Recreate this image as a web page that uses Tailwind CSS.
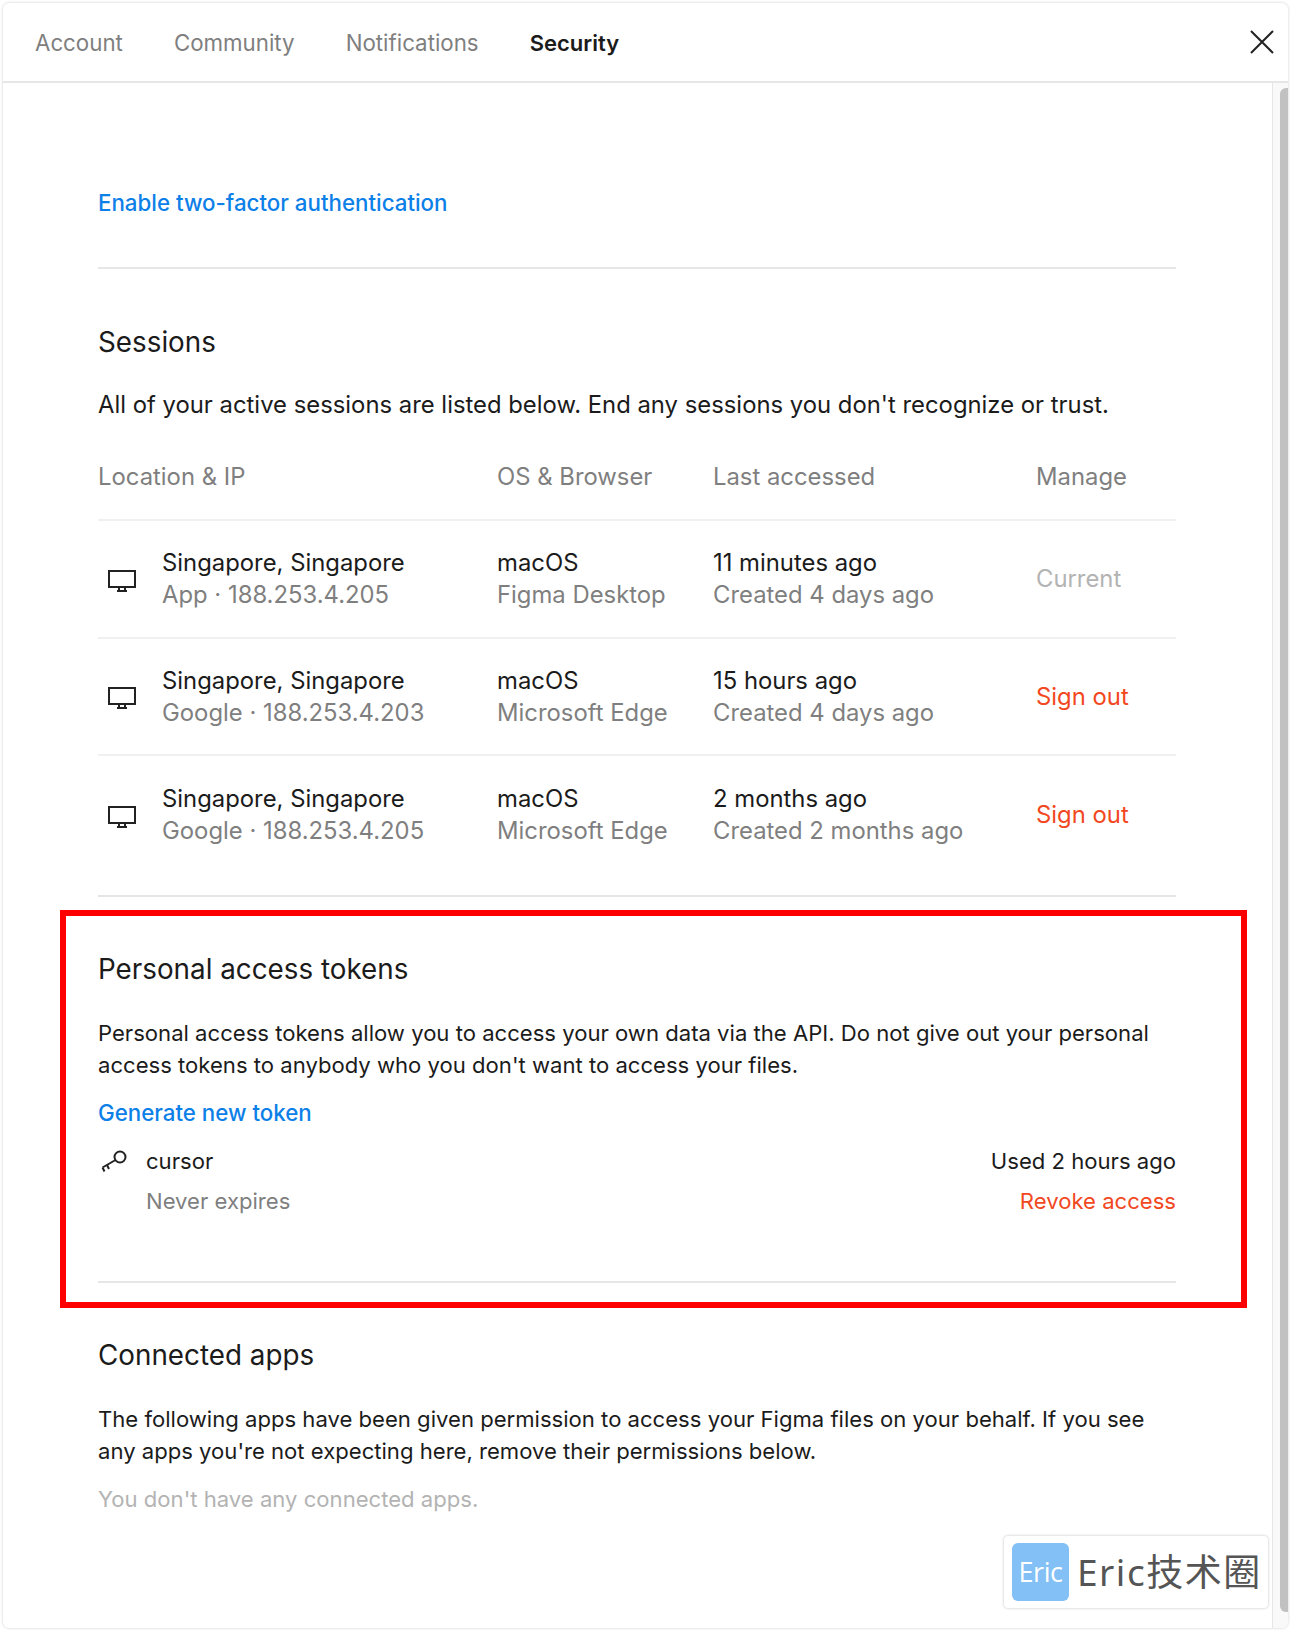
<!doctype html>
<html lang="en">
  <head>
    <meta charset="UTF-8" />
    <title>Security settings</title>
    <script src="https://cdn.jsdelivr.net/npm/@tailwindcss/browser@4"></script>
  </head>
  <body class="bg-white h-[1632px] overflow-hidden font-['Inter',sans-serif] text-[22.1px] leading-[32px] text-[#1b1b1b]">
    <div class="relative ml-[3px] mt-[3px] h-[1625px] w-[1285px] rounded-[6px] bg-white shadow-[0_0_3px_rgba(0,0,0,0.2)] overflow-hidden">
      <!-- tabs -->
      <div class="flex h-[80px] items-center justify-between border-b-2 border-[#e6e6e6] pl-[32px] pr-[14px]">
        <div class="flex gap-[51px] pt-[2px] text-[22.3px] text-[#7f7f7f]">
          <span>Account</span>
          <span>Community</span>
          <span>Notifications</span>
          <span class="font-semibold text-[22px] text-[#1b1b1b]">Security</span>
        </div>
        <svg class="w-[24px] h-[24px]" viewBox="0 0 24 24" fill="none" stroke="#222" stroke-width="2">
          <path d="M1 1l22 22M23 1L1 23" />
        </svg>
      </div>

      <div class="flex h-[1545px]">
        <div class="w-[1269px] pl-[95px] pr-[96px]">
          <div class="h-[186px] border-b-2 border-[#e6e6e6] pt-[104px]">
            <a class="font-medium text-[22.3px] text-[#0d80e8]">Enable two-factor authentication</a>
          </div>

          <h2 class="mt-[55px] text-[27.8px] leading-[36px]">Sessions</h2>
          <div class="text-[23.85px]">
            <p class="mt-[29px]">All of your active sessions are listed below. End any sessions you don't recognize or trust.</p>

            <div class="mt-[40px] grid grid-cols-[399px_216px_323px_1fr] h-[60px] border-b-2 border-[#f0f0f0] text-[#7f7f7f]">
              <span>Location &amp; IP</span>
              <span>OS &amp; Browser</span>
              <span>Last accessed</span>
              <span>Manage</span>
            </div>

            <div class="grid grid-cols-[399px_216px_323px_1fr] h-[118px] items-center border-b-2 border-[#f0f0f0]">
              <div class="flex items-center">
                <svg class="ml-[9px] mr-[25px] mt-[3px] w-[30px] h-[24px]" viewBox="0 0 30 24" fill="none" stroke="#222" stroke-width="2">
                  <path d="M2 2h26v16H2zM10 22h10M12 18v4M18 18v4" />
                </svg>
                <div>
                  <div>Singapore, Singapore</div>
                  <div class="text-[#7f7f7f]">App · 188.253.4.205</div>
                </div>
              </div>
              <div>
                <div>macOS</div>
                <div class="text-[#7f7f7f]">Figma Desktop</div>
              </div>
              <div>
                <div>11 minutes ago</div>
                <div class="text-[#7f7f7f]">Created 4 days ago</div>
              </div>
              <span class="text-[#b3b3b3]">Current</span>
            </div>

            <div class="grid grid-cols-[399px_216px_323px_1fr] h-[117px] items-center border-b-2 border-[#f0f0f0]">
              <div class="flex items-center">
                <svg class="ml-[9px] mr-[25px] mt-[3px] w-[30px] h-[24px]" viewBox="0 0 30 24" fill="none" stroke="#222" stroke-width="2">
                  <path d="M2 2h26v16H2zM10 22h10M12 18v4M18 18v4" />
                </svg>
                <div>
                  <div>Singapore, Singapore</div>
                  <div class="text-[#7f7f7f]">Google · 188.253.4.203</div>
                </div>
              </div>
              <div>
                <div>macOS</div>
                <div class="text-[#7f7f7f]">Microsoft Edge</div>
              </div>
              <div>
                <div>15 hours ago</div>
                <div class="text-[#7f7f7f]">Created 4 days ago</div>
              </div>
              <span class="text-[#f24822]">Sign out</span>
            </div>

            <div class="grid grid-cols-[399px_216px_323px_1fr] h-[118px] items-center">
              <div class="flex items-center">
                <svg class="ml-[9px] mr-[25px] mt-[3px] w-[30px] h-[24px]" viewBox="0 0 30 24" fill="none" stroke="#222" stroke-width="2">
                  <path d="M2 2h26v16H2zM10 22h10M12 18v4M18 18v4" />
                </svg>
                <div>
                  <div>Singapore, Singapore</div>
                  <div class="text-[#7f7f7f]">Google · 188.253.4.205</div>
                </div>
              </div>
              <div>
                <div>macOS</div>
                <div class="text-[#7f7f7f]">Microsoft Edge</div>
              </div>
              <div>
                <div>2 months ago</div>
                <div class="text-[#7f7f7f]">Created 2 months ago</div>
              </div>
              <span class="text-[#f24822]">Sign out</span>
            </div>
          </div>

          <div class="mt-[21px] border-t-2 border-[#e6e6e6]">
            <h2 class="mt-[54px] text-[27.8px] leading-[36px]">Personal access tokens</h2>
            <p class="mt-[30px]">Personal access tokens allow you to access your own data via the API. Do not give out your personal access tokens to anybody who you don't want to access your files.</p>
            <a class="mt-[16px] block font-medium text-[22.3px] text-[#0d80e8]">Generate new token</a>
            <div class="mt-[16px] flex justify-between">
              <div class="flex">
                <svg class="ml-[3px] mr-[18px] mt-[4px] w-[27px] h-[24px]" viewBox="0 0 27 24" fill="none" stroke="#222" stroke-width="2">
                  <circle cx="19" cy="8" r="5.5" />
                  <path d="M14.500 11L1.500 18.500M1.500 18.500l2 4M6 16l2 4" />
                </svg>
                <div>
                  <div>cursor</div>
                  <div class="mt-[8px] text-[#7f7f7f]">Never expires</div>
                </div>
              </div>
              <div class="text-right">
                <div>Used 2 hours ago</div>
                <div class="mt-[8px] text-[#f24822]">Revoke access</div>
              </div>
            </div>
            <div class="mt-[64px] border-t-2 border-[#e6e6e6]"></div>
          </div>

          <h2 class="mt-[54px] text-[27.8px] leading-[36px]">Connected apps</h2>
          <p class="mt-[30px]">The following apps have been given permission to access your Figma files on your behalf. If you see any apps you're not expecting here, remove their permissions below.</p>
          <p class="mt-[16px] text-[#b3b3b3]">You don't have any connected apps.</p>
        </div>

        <!-- scrollbar -->
        <div class="w-[16px] border-l border-[#e6e6e6] bg-[#f9f9f9] pl-[7px] pt-[5px]">
          <div class="h-[1524px] w-[8px] rounded-l-[6px] bg-[#c1c1c1]"></div>
        </div>
      </div>

      <!-- highlight box -->
      <div class="absolute left-[57px] top-[907px] h-[398px] w-[1187px] border-[6px] border-[#ff0000]"></div>

      <!-- watermark -->
      <div class="absolute left-[1001px] top-[1533px] flex h-[72px] w-[264px] items-center rounded-[4px] bg-white pl-[8px] shadow-[0_0_3px_rgba(0,0,0,0.25)]">
        <div class="flex h-[58px] w-[57px] items-center justify-center rounded-[6px] bg-[#83c0f5] font-['Open_Sans',sans-serif] text-[27px] font-medium tracking-[-0.5px] text-white">Eric</div>
        <span class="ml-[8px] font-['Noto_Sans','Noto_Sans_CJK_SC',sans-serif] text-[37px] leading-[44px] tracking-[1.500px] text-[#555555]">Eric技术圈</span>
      </div>
    </div>
  </body>
</html>
